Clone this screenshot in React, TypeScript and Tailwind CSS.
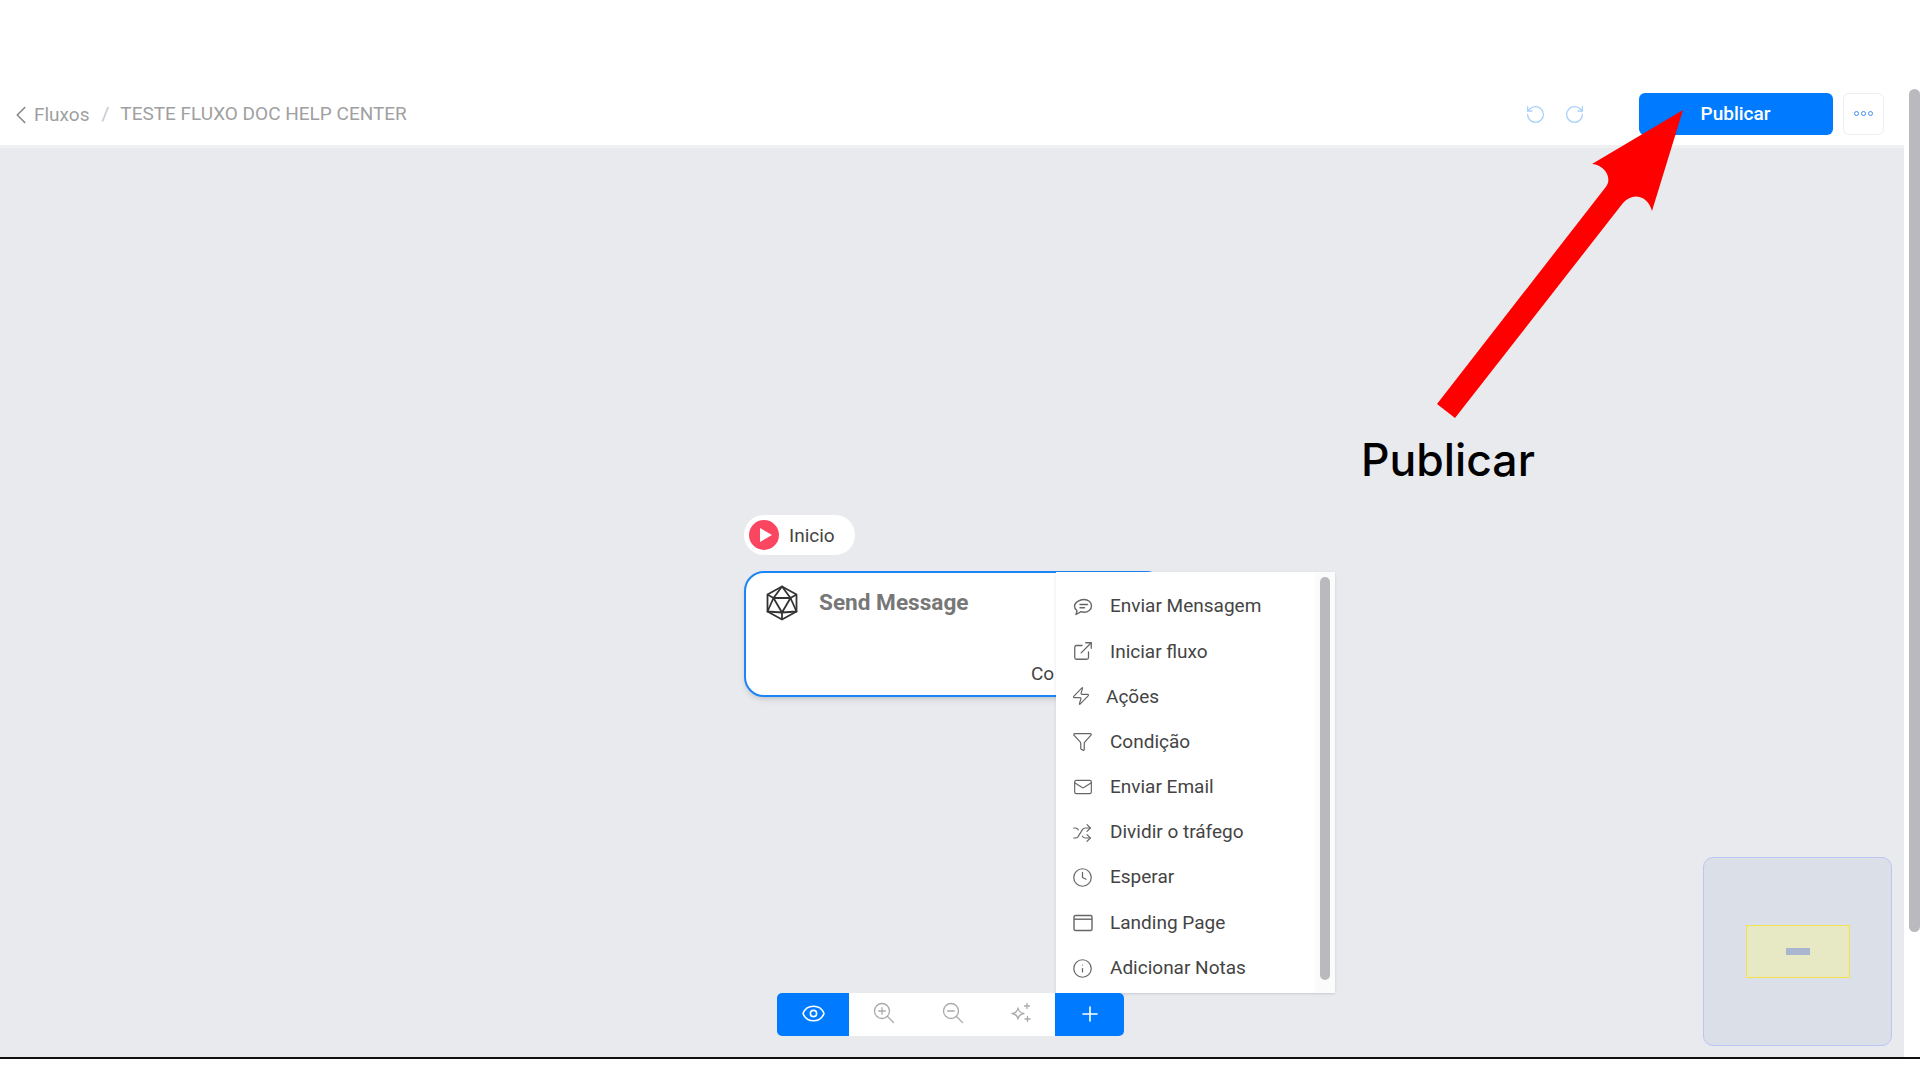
import React from 'react'
import {
  ChevronLeft,
  RotateCcw,
  RotateCw,
  ExternalLink,
  Zap,
  Funnel,
  Mail,
  Shuffle,
  Clock,
  Info,
  Eye,
  Plus,
} from 'lucide-react'

function ChatIcon() {
  return (
    <svg width="20" height="20" viewBox="0 0 20 20" fill="none" stroke="#666" strokeWidth="1.4" strokeLinecap="round" strokeLinejoin="round">
      <path d="M11 2.500c4 0 7.500 2.600 7.500 6.400s-3.500 6.300-7.500 6.300c-1 0-2-.1-2.900-.5L3 17.500l1-3.700C2.500 12.600 1.500 10.900 1.500 8.900 1.500 5.100 7 2.500 11 2.500z" />
      <path d="M7 7.500h7.500M7 10.800h4.500" />
    </svg>
  )
}

function WindowIcon() {
  return (
    <svg width="20" height="18" viewBox="0 0 20 18" fill="none" stroke="#666" strokeWidth="1.4" strokeLinejoin="round">
      <rect x="1" y="1.500" width="18" height="15" rx="1.500" />
      <path d="M1 5.200h18" />
    </svg>
  )
}

function IcosaIcon() {
  return (
    <svg width="32" height="36" viewBox="0 0 32 36" fill="none" stroke="#333" strokeWidth="1.800" strokeLinejoin="round">
      <path d="M16 1.500 30.500 9.500v17L16 34.500 1.500 26.500v-17z" />
      <path d="M16 1.500 24.500 13H7.500zM7.500 13 16 27.500 24.500 13M1.500 9.500 7.500 13 1.500 26.500 16 27.500 30.500 26.500 24.500 13 30.500 9.500M16 27.500v7" />
    </svg>
  )
}

function LensIcon({ plus }: { plus?: boolean }) {
  return (
    <svg width="22" height="22" viewBox="0 0 22 22" fill="none" stroke="#aaa" strokeWidth="1.300" strokeLinecap="round">
      <circle cx="9" cy="9" r="7.500" />
      <path d="M14.500 14.500 20.500 20.500M5.700 9h6.600" />
      {plus && <path d="M9 5.700v6.600" />}
    </svg>
  )
}

function StarsIcon() {
  return (
    <svg width="22" height="22" viewBox="0 0 22 22" fill="none" stroke="#aaa" strokeWidth="1.300" strokeLinecap="round" strokeLinejoin="round">
      <path d="M8 6c.6 3.200 2.200 4.900 6 5.500-3.800.6-5.400 2.300-6 5.500-.6-3.200-2.200-4.900-6-5.500 3.800-.6 5.400-2.300 6-5.500z" />
      <path d="M17 1.500v5M14.500 4h5M17.500 14.500v5M15 17h5" />
    </svg>
  )
}

const menuItems = [
  { label: 'Enviar Mensagem', icon: <ChatIcon /> },
  { label: 'Iniciar fluxo', icon: <ExternalLink size={22} strokeWidth={1.4} color="#666" className="ml-[-1px] mt-[-2px]" /> },
  { label: 'Ações', icon: <Zap size={20} strokeWidth={1.4} color="#666" className="ml-[-2px] mt-[-1px]" />, tight: true },
  { label: 'Condição', icon: <Funnel size={21} strokeWidth={1.4} color="#666" className="ml-[-1px] mt-[-2px]" /> },
  { label: 'Enviar Email', icon: <Mail size={20} strokeWidth={1.4} color="#666" /> },
  { label: 'Dividir o tráfego', icon: <Shuffle size={20} strokeWidth={1.4} color="#666" className="ml-[-1px]" /> },
  { label: 'Esperar', icon: <Clock size={21} strokeWidth={1.4} color="#666" className="ml-[-1px]" /> },
  { label: 'Landing Page', icon: <WindowIcon /> },
  { label: 'Adicionar Notas', icon: <Info size={21} strokeWidth={1.4} color="#666" className="ml-[-1px]" /> },
]

export default function App() {
  return (
    <div className="relative w-[1920px] h-[1080px] overflow-hidden bg-white font-['Roboto',sans-serif]">
      <div className="flex h-[1057px]">
        <div className="flex flex-col w-[1904px]">
          <header className="h-[148px] shrink-0 flex items-start pt-[93px] pl-[17px] pr-[20px] border-b-[3px] border-[#eef0f2]">
            <div className="h-[42px] flex items-center text-[#a0a0a0]">
              <ChevronLeft size={30} strokeWidth={1.3} className="ml-[-11px] mt-[2px]" color="#888" />
              <span className="ml-[-2px] mt-[3px] text-[19px]">Fluxos</span>
              <span className="ml-[12px] text-[19px] text-[#c4c8d0]">/</span>
              <span className="ml-[11px] mt-[1px] text-[19px]">TESTE FLUXO DOC HELP CENTER</span>
            </div>
            <div className="ml-auto flex items-center h-[42px]">
              <RotateCcw size={21} strokeWidth={1.5} color="#a9d0fb" />
              <RotateCw size={21} strokeWidth={1.5} color="#a9d0fb" className="ml-[18px]" />
              <button className="ml-[54px] w-[194px] h-[42px] rounded-[6px] bg-[#007bff] text-white text-[19px] font-medium pr-[1px]">
                Publicar
              </button>
              <button className="ml-[10px] w-[41px] h-[42px] rounded-[6px] bg-white border border-[#eceef1] flex items-center justify-center gap-[2px] pb-[2px]">
                <span className="w-[5px] h-[5px] rounded-full border-[1.500px] border-[#3f8ff0]" />
                <span className="w-[5px] h-[5px] rounded-full border-[1.500px] border-[#3f8ff0]" />
                <span className="w-[5px] h-[5px] rounded-full border-[1.500px] border-[#3f8ff0]" />
              </button>
            </div>
          </header>

          <main className="relative flex-1 bg-[#e9eaee]">
            <div className="absolute left-[744px] top-[367px] w-[111px] h-[40px] rounded-full bg-white flex items-center pl-[5px]">
              <span className="w-[30px] h-[30px] rounded-full bg-[#fb4661] flex items-center justify-center">
                <span className="ml-[3px] w-0 h-0 border-y-[7px] border-y-transparent border-l-[12px] border-l-white" />
              </span>
              <span className="ml-[10px] mt-[2px] text-[19px] text-[#444]">Inicio</span>
            </div>

            <div className="absolute left-[744px] top-[423px] w-[422px] h-[126px] rounded-[20px] border-[2px] border-[#1a86f5] bg-white shadow-md">
              <div className="flex items-center pl-[20px] pt-[12px]">
                <IcosaIcon />
                <span className="ml-[21px] text-[22.600px] font-bold text-[#777]">Send Message</span>
              </div>
              <div className="absolute left-[285px] top-[87px] text-[19px] text-[#444]">Co</div>
            </div>

            <div className="absolute left-[1056px] top-[424px] w-[279px] h-[421px] bg-white shadow-sm flex">
              <ul className="flex-1 pt-[12px]">
                {menuItems.map((item) => (
                  <li key={item.label} className="h-[45.200px] flex items-center pl-[17px] text-[19px] text-[#444]">
                    <span className={`${item.tight ? 'w-[33px]' : 'w-[37px]'} flex items-center`}>{item.icon}</span>
                    {item.label}
                  </li>
                ))}
              </ul>
              <div className="w-[20px] bg-[#fbfbfb] pt-[5px] pl-[5px]">
                <div className="w-[10px] h-[403px] rounded-full bg-[#b9b9be]" />
              </div>
            </div>

            <div className="absolute left-[777px] top-[845px] w-[347px] h-[43px] rounded-[5px] overflow-hidden bg-white flex">
              <div className="w-[72px] bg-[#007bff] flex items-center justify-center pb-[3px]">
                <Eye size={25} strokeWidth={1.500} color="#fff" />
              </div>
              <div className="flex-1 flex items-center pb-[3px]">
                <span className="w-[69px] flex justify-center"><LensIcon plus /></span>
                <span className="w-[69px] flex justify-center"><LensIcon /></span>
                <span className="w-[68px] flex justify-center"><StarsIcon /></span>
              </div>
              <div className="w-[69px] bg-[#007bff] flex items-center justify-center pb-[2px]">
                <Plus size={24} strokeWidth={1.600} color="#fff" />
              </div>
            </div>

            <div className="absolute left-[1703px] top-[709px] w-[189px] h-[189px] rounded-[10px] border border-[#bcc6f5] bg-[#dbdfe8] flex items-center justify-center">
              <div className="w-[104px] h-[53px] bg-[#e7e9c5] border border-[#f5e150] flex items-center justify-center">
                <div className="w-[24px] h-[7px] bg-[#aab6cf]" />
              </div>
            </div>

            <div className="absolute left-[1361px] top-[284px] text-[44.500px] leading-[56px] font-medium text-black font-['Inter',sans-serif]">
              Publicar
            </div>
          </main>
        </div>

        <div className="w-[16px] pl-[5px] pt-[89px]">
          <div className="w-[11px] h-[843px] rounded-full bg-[#b9b9be]" />
        </div>
      </div>
      <div className="h-[2px] bg-[#111]" />

      <svg className="absolute left-0 top-0 pointer-events-none" width="1920" height="1080" viewBox="0 0 1920 1080">
        <path
          fill="#ff0000"
          d="M1683 110 L1592 164 C1606 165 1613 180 1605 188 L1437 404 L1455 418 L1623 203 C1632 192 1648 195 1652 211 Z"
        />
      </svg>
    </div>
  )
}
